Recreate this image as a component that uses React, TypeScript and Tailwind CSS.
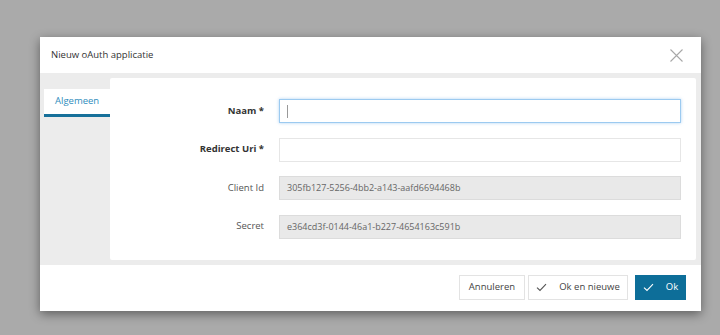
import React from 'react';

const font = { fontFamily: '"Open Sans", "Noto Sans", sans-serif' };

function Check({ className }: { className?: string }) {
  return (
    <svg width="11" height="9" viewBox="0 0 11 9" className={className} fill="none">
      <path d="M1 4.6 L4 7.5 L10 1.2" stroke="currentColor" strokeWidth="1.1" />
    </svg>
  );
}

interface RowProps {
  label: string;
  required?: boolean;
  value?: string;
  readOnly?: boolean;
  focused?: boolean;
}

function Row({ label, required, value, readOnly, focused }: RowProps) {
  let box = 'border border-[#e6e6e6] bg-white';
  if (readOnly) box = 'border border-[#dcdcdc] bg-[#e9e9e9] text-[#666]';
  if (focused) box = 'border border-[#9ccaf0] bg-white shadow-[0_0_3px_rgba(120,180,235,0.6)]';
  return (
    <div className="flex items-center h-[24px]">
      <div className={`w-[154px] text-right text-[9.5px] ${required ? 'font-bold text-[#333]' : 'text-[#555]'}`}>
        {label}
      </div>
      <div className={`ml-[15px] w-[402px] h-[24px] flex items-center pl-[7px] text-[9px] ${box}`}>
        {focused && <span className="w-px h-[13px] bg-[#999]" />}
        {value}
      </div>
    </div>
  );
}

export default function App() {
  return (
    <div className="w-[720px] h-[335px] bg-[#aaaaaa] pt-[37px] pl-[40px] overflow-hidden" style={font}>
      <div className="w-[661px] h-[274px] bg-white flex flex-col shadow-[0_3px_10px_rgba(0,0,0,0.45)]">
        <div className="h-[36px] flex items-center justify-between pl-[11px] pr-[18px]">
          <span className="text-[9.5px] text-[#333]">Nieuw oAuth applicatie</span>
          <svg width="13" height="13" viewBox="0 0 13 13">
            <path d="M0.5 0.5 L12.5 12.5 M12.5 0.5 L0.5 12.5" stroke="#a8a8a8" strokeWidth="1.1" />
          </svg>
        </div>
        <div className="h-[192px] bg-[#ececec] flex">
          <div className="w-[70px] pt-[16px] pl-[4px]">
            <div className="h-[28px] bg-white border-b-[3px] border-[#17709a] flex items-center pl-[11px] text-[9.5px] text-[#2f8dbd]">
              Algemeen
            </div>
          </div>
          <div className="flex-1 bg-white my-[5px] mr-[5px] rounded-[2px] pt-[21px] flex flex-col gap-[14.5px]">
            <Row label="Naam *" required focused />
            <Row label="Redirect Uri *" required />
            <Row label="Client Id" readOnly value="305fb127-5256-4bb2-a143-aafd6694468b" />
            <Row label="Secret" readOnly value="e364cd3f-0144-46a1-b227-4654163c591b" />
          </div>
        </div>
        <div className="flex-1 flex items-start justify-end pt-[10px] pr-[15px]">
          <button className="w-[66px] h-[25px] border border-[#e3e3e3] bg-white text-[9.5px] text-[#444]">
            Annuleren
          </button>
          <button className="ml-[3px] w-[100px] h-[25px] border border-[#e3e3e3] bg-white text-[9.5px] text-[#444] flex items-center justify-center gap-[12px]">
            <Check className="text-[#555]" />
            <span>Ok en nieuwe</span>
          </button>
          <button className="ml-[7px] w-[51px] h-[25px] bg-[#0d6e99] text-[9.5px] text-white flex items-center justify-center gap-[12px]">
            <Check className="text-white" />
            <span>Ok</span>
          </button>
        </div>
      </div>
    </div>
  );
}
